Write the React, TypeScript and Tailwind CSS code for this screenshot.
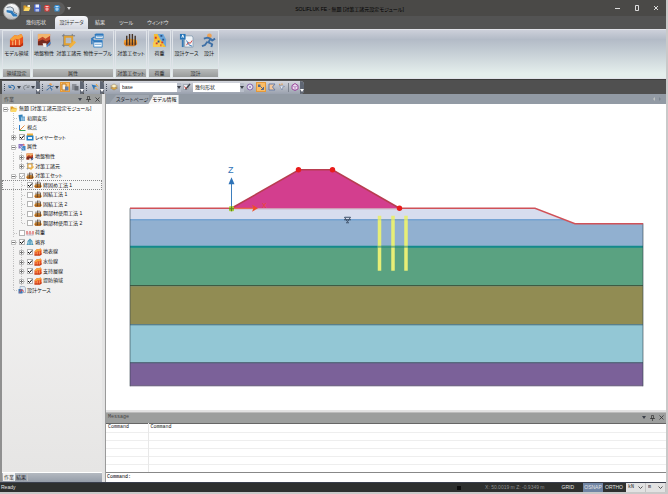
import type { ReactNode } from "react";

const UI = "font-['Liberation_Sans','Noto_Sans_CJK_JP',sans-serif]";
const MONO = "font-['Liberation_Mono','Noto_Sans_CJK_JP',monospace]";

/* ---------- icons ---------- */

type IconProps = { className?: string };

function Svg({ className = "size-4", box = "0 0 16 16", children }: IconProps & { box?: string; children: ReactNode }) {
  return (
    <svg viewBox={box} className={`shrink-0 ${className}`} fill="none" aria-hidden="true">
      {children}
    </svg>
  );
}

const ModelIcon = ({ className }: IconProps) => (
  <Svg className={className}>
    <path d="M1 7l5-5 3 1 4-2 2 3v9l-3 2H1z" fill="#e8501c" />
    <path d="M1 7l5-5 3 1 4-2 2 3-5 3-3-1-3 3z" fill="#f7a23b" />
    <path d="M4 9v6M7 7v8M11 7v8" stroke="#fbc58a" />
    <path d="M1 13h11l3-3v3l-3 2H1z" fill="#b92f12" />
  </Svg>
);
const GroundIcon = ({ className }: IconProps) => (
  <Svg className={className}>
    <path d="M1 1h13v12H1z" fill="#c4492a" />
    <path d="M1 1h13v2L9 6 6 4 1 7z" fill="#f2b46c" />
    <path d="M1 9l5-2 4 2 4-2v6H1z" fill="#74291f" />
    <path d="M9 14l5-5 1 2-4 4z" fill="#4b84c4" />
    <path d="M6 11h4v4H7z" fill="#f2ece6" />
  </Svg>
);
const SpecIcon = ({ className }: IconProps) => (
  <Svg className={className}>
    <path d="M1 3h14M1 13h10M3 1v14M12 1v9" stroke="#6d7480" strokeWidth="1" />
    <path d="M4 4h8v8H4z" stroke="#dfa032" strokeWidth="2" />
    <path d="M8 14l6-6 2 2-6 6z" fill="#f3b23c" />
  </Svg>
);
const TableIcon = ({ className }: IconProps) => (
  <Svg className={className}>
    <path d="M6 1h8v5H6zM4 8h9v7H4z" fill="#f7fbff" stroke="#3d86c6" />
    <path d="M5 2h9M4 9h9" stroke="#2f78bd" strokeWidth="2" />
    <path d="M7 4h6M5 12h7" stroke="#6a9fce" />
    <path d="M5 4L2 6l3 3M2 6v6" stroke="#2f78bd" strokeWidth="1.500" />
  </Svg>
);
const PileIcon = ({ className }: IconProps) => (
  <Svg className={className}>
    <path d="M1 8q7-4 14 0v4H1z" fill="#f7a030" />
    <path d="M1 10h14v2l-3 2H3l-2-2z" fill="#d8812a" />
    <path d="M4 3v10M7 1v12M10 1v12M13 3v10" stroke="#463326" strokeWidth="1.500" />
  </Svg>
);
const LoadIcon = ({ className }: IconProps) => (
  <Svg className={className}>
    <path d="M2 1h4l9 14H2z" fill="#f4bd35" />
    <path d="M6 1h6l3 6v8L9 7z" fill="#6aa5d9" />
    <path d="M1 10l6-3 5 8H1z" fill="#f7cb50" />
    <path d="M4 4v2M10 10h2M4 11h2M9 13h1" stroke="#d2382c" strokeWidth="2" />
    <path d="M9 3h2M12 6v2M7 8v2" stroke="#274f86" strokeWidth="2" />
  </Svg>
);
const CaseIcon = ({ className }: IconProps) => (
  <Svg className={className}>
    <path d="M6 3h8l1 2v10H6z" fill="#f0f4f8" stroke="#8ea2b5" />
    <path d="M1 1h6v6H1z" fill="#2474b8" />
    <path d="M3 5l1-3 1 3" stroke="#fff" />
    <path d="M4 7v8" stroke="#3679b4" strokeWidth="2" />
    <path d="M8 13l2-3 2 1 2-3" stroke="#d33d38" />
    <path d="M8 8l3 5 3 1" stroke="#3679b4" />
  </Svg>
);
const RunIcon = ({ className }: IconProps) => (
  <Svg className={className}>
    <circle cx="9" cy="3" r="2.500" fill="#eda254" />
    <path d="M3 6l4-1 3 1-2 4 4 2-1 3M7 9l-3 4-3 1M10 6l2 2 3-2" stroke="#3f70a6" strokeWidth="2" strokeLinejoin="round" />
  </Svg>
);
const FolderIcon = ({ className }: IconProps) => (
  <Svg className={className}>
    <path d="M1 3h5l1 2h6v3H4l-3 6z" fill="#d99a24" />
    <path d="M4 7h11l-3 7H1z" fill="#fbd766" />
    <path d="M9 2h5v4H9z" fill="#f4f1da" />
  </Svg>
);
const SaveIcon = ({ className }: IconProps) => (
  <Svg className={className}>
    <path d="M2 1h11l2 2v12H2z" fill="#4b66c8" />
    <path d="M5 1h7v6H5z" fill="#edf2fb" />
    <path d="M5 10h7v5H5z" fill="#b4c3ea" />
  </Svg>
);
const HouseIcon = ({ className, color }: IconProps & { color: string }) => (
  <Svg className={className}>
    <path d="M1 7l3-5h8l3 5-2 1v7H3V8z" fill={color} />
    <path d="M5 5h6M8 7v7" stroke="#fff" strokeWidth="1.500" />
    <path d="M5 9h2v2H5zM9 9h2v2H9z" fill="#fff" />
  </Svg>
);
const LayersIcon = ({ className }: IconProps) => (
  <Svg className={className}>
    <path d="M1 10l7-4 7 4-7 4z" fill="#e5ad45" stroke="#8d7448" />
    <path d="M1 6l7-4 7 4-7 4z" fill="#fbf0c5" stroke="#917b50" />
  </Svg>
);
const LayerSetIcon = ({ className }: IconProps) => (
  <Svg className={className}>
    <path d="M2 1h12v5H2z" fill="#f2b13c" />
    <path d="M1 5h14v10H1z" fill="#1f7fc5" />
    <path d="M4 8h8v4H4z" fill="#e9f4fb" />
  </Svg>
);
const InitialIcon = ({ className }: IconProps) => (
  <Svg className={className}>
    <path d="M1 2l8-1 1 12-7 2z" fill="#2f7fb9" />
    <path d="M5 5h9v9H6z" fill="#5f9fcb" />
    <path d="M7 7v6M10 7v6M12 7v6" stroke="#dceef8" />
  </Svg>
);
const ViewIcon = ({ className }: IconProps) => (
  <Svg className={className}>
    <path d="M3 2v11" stroke="#2b7cc9" strokeWidth="2" />
    <path d="M3 13h12" stroke="#35a853" strokeWidth="2" />
    <path d="M3 13L13 3" stroke="#e58a3c" strokeWidth="2" />
  </Svg>
);
const AttributeIcon = ({ className }: IconProps) => (
  <Svg className={className}>
    <path d="M1 2h9v9H1z" fill="#8a73c2" />
    <path d="M7 6h8v9H7z" fill="#3f86c4" />
    <path d="M2 14L13 2M3 5l9 8" stroke="#fff" strokeWidth="1" />
    <path d="M10 1l4 3-3 2z" fill="#d4473c" />
  </Svg>
);
const LoadSetIcon = ({ className }: IconProps) => (
  <Svg className={className}>
    <path d="M2 4v7M8 4v7M14 4v7" stroke="#d43a3a" strokeWidth="2" />
    <path d="M1 12h14" stroke="#8b86a6" />
    <path d="M5 7v3M11 7v3" stroke="#d48e9c" />
  </Svg>
);
const BoundaryIcon = ({ className }: IconProps) => (
  <Svg className={className}>
    <path d="M8 1l5 5v4l2 4H1l2-4V6z" fill="#4896b8" />
    <path d="M5 7v6M8 5v8M11 7v6" stroke="#e4f3f8" />
  </Svg>
);
const CaseSetIcon = ({ className }: IconProps) => (
  <Svg className={className}>
    <path d="M4 1h9l2 3v9H4z" fill="#dfe8f2" stroke="#7289a6" />
    <path d="M1 6h8v9H1z" fill="#3f77b4" />
    <path d="M3 13l4-6 5 4" stroke="#e4504b" strokeWidth="2" />
  </Svg>
);

function Caret({ className = "text-[#3c414a]" }: IconProps) {
  return (
    <Svg box="0 0 4 3" className={`h-[3px] w-1 ${className}`}>
      <path d="M0 0h4L2 3z" fill="currentColor" />
    </Svg>
  );
}

/* ---------- title bar and menu ---------- */

function TitleBar() {
  return (
    <header className="flex h-4 items-center bg-[#4a4947] pl-[21px]">
      <div className="flex h-[13px] items-center gap-[2px] rounded-r-full bg-[#5d5c5b] pr-1 pl-[2px]">
        <button aria-label="開く"><FolderIcon className="size-2" /></button>
        <button aria-label="保存"><SaveIcon className="size-2" /></button>
        <button aria-label="赤"><HouseIcon className="size-2" color="#d4403c" /></button>
        <button aria-label="青"><HouseIcon className="size-2" color="#3b8fd0" /></button>
      </div>
      <button aria-label="カスタマイズ" className="ml-[2px]"><Caret className="text-[#d0d0d0]" /></button>
      <h1 className="flex-1 pt-[2px] pl-[13px] text-center text-black">SOLIFLUK FE - 無題 [対策工諸元設定モジュール]</h1>
      <div className="mr-[7px] flex w-[44px] justify-between text-[#dcdcdc]">
        <button aria-label="最小化"><Svg className="size-[6px]" box="0 0 6 6"><path d="M0 3.500h5" stroke="currentColor" /></Svg></button>
        <button aria-label="最大化"><Svg className="size-[6px]" box="0 0 6 6"><path d="M1.500.5h3v5h-3z" stroke="currentColor" /></Svg></button>
        <button aria-label="閉じる"><Svg className="size-[6px]" box="0 0 6 6"><path d="M1 1l4 4M5 1L1 5" stroke="currentColor" /></Svg></button>
      </div>
    </header>
  );
}

function MenuTabs() {
  const tab = "px-[7px] text-[#e6e6e6]";
  return (
    <nav className="flex h-[13px] items-center bg-[#535353] pl-[19px]">
      <button className={tab}>幾何形状</button>
      <button className="ml-[2px] h-full w-[33px] rounded-t-sm bg-linear-to-b from-[#f6f7fa] to-[#d4d7e0] text-[#2b2b2b]">設計データ</button>
      <button className={tab}>結果</button>
      <button className={tab}>ツール</button>
      <button className={tab}>ウィンドウ</button>
    </nav>
  );
}

/* ---------- ribbon ---------- */

function RibbonGroup({ label, className, children }: { label: string; className: string; children: ReactNode }) {
  return (
    <section className={`flex flex-col border border-[#dfe3e8] ${className}`}>
      <div className="flex flex-1 justify-around">{children}</div>
      <h2 className="h-[8px] bg-linear-to-b from-[#b9bbbb] to-[#989b9b] text-center leading-[8px] text-[#2c2c2c]">{label}</h2>
    </section>
  );
}

function RibbonButton({ label, children }: { label: string; children: ReactNode }) {
  return (
    <button className="flex flex-col items-center gap-[2px] pt-[2px] whitespace-nowrap text-[#111]">
      {children}
      <span>{label}</span>
    </button>
  );
}

function Ribbon() {
  const icon = "size-[15px]";
  return (
    <div className="flex h-[50px] gap-[1px] border-y border-[#e0e2e8] bg-linear-to-b from-[#cdd0da] from-0% via-[#b3bbc7] via-20% to-[#e4eeec] to-90% pl-[2px]">
      <RibbonGroup label="領域設定" className="w-[29px]">
        <RibbonButton label="モデル領域"><ModelIcon className={icon} /></RibbonButton>
      </RibbonGroup>
      <RibbonGroup label="属性" className="w-[82px]">
        <RibbonButton label="地盤物性"><GroundIcon className={icon} /></RibbonButton>
        <RibbonButton label="対策工諸元"><SpecIcon className={icon} /></RibbonButton>
        <RibbonButton label="物性テーブル"><TableIcon className={icon} /></RibbonButton>
      </RibbonGroup>
      <RibbonGroup label="対策工セット" className="w-[32px]">
        <RibbonButton label="対策工セット"><PileIcon className={icon} /></RibbonButton>
      </RibbonGroup>
      <RibbonGroup label="荷重" className="w-[23px]">
        <RibbonButton label="荷重"><LoadIcon className={icon} /></RibbonButton>
      </RibbonGroup>
      <RibbonGroup label="設計" className="w-[47px]">
        <RibbonButton label="設計ケース"><CaseIcon className={icon} /></RibbonButton>
        <RibbonButton label="設計"><RunIcon className={icon} /></RibbonButton>
      </RibbonGroup>
    </div>
  );
}

/* ---------- toolbar ---------- */

function ToolGroup({ className, children }: { className: string; children: ReactNode }) {
  return (
    <div className={`flex h-[13px] items-center rounded-r-sm bg-linear-to-b from-[#d3d6dd] to-[#9aa1ae] ${className}`}>
      <span className="mx-[2px] h-[7px] w-px border-l border-dotted border-[#4a5260]" />
      <div className="flex flex-1 items-center justify-around">{children}</div>
      <button aria-label="その他" className="flex h-full w-1 items-end rounded-r-sm bg-[#5f6673] pb-[2px]">
        <Caret className="text-white" />
      </button>
    </div>
  );
}

function ToolButton({ label, on, children }: { label: string; on?: boolean; children: ReactNode }) {
  return (
    <button aria-label={label} aria-pressed={on} className={on ? "border border-[#e39a3c] bg-[#fbbd66]" : ""}>
      {children}
    </button>
  );
}

function Combo({ label, value, className }: { label: string; value: string; className: string }) {
  return (
    <div className={`relative h-[9px] bg-white ${className}`}>
      <select aria-label={label} className="block size-full appearance-none pl-[2px] leading-[9px] text-[#222]">
        <option>{value}</option>
      </select>
      <span className="pointer-events-none absolute inset-y-0 right-0 flex w-1 items-center bg-[#b9bfca]"><Caret /></span>
    </div>
  );
}

function Toolbar() {
  const i = "size-2";
  return (
    <div className="flex h-[15px] items-center border-t border-[#3c3c3c] bg-[#505050] pl-[2px]">
      <ToolGroup className="w-[38px]">
        <ToolButton label="元に戻す"><Svg className={i}><path d="M2 4v5h5M3 8q4-6 9-2 3 4-2 8" stroke="#2c6ca8" strokeWidth="2" /></Svg></ToolButton>
        <Caret />
        <ToolButton label="やり直し"><Svg className={i}><path d="M14 4v5H9M13 8Q9 2 4 6q-3 4 2 8" stroke="#84898f" strokeWidth="2" /></Svg></ToolButton>
        <Caret />
      </ToolGroup>
      <ToolGroup className="w-[44px]">
        <ToolButton label="実行"><RunIcon className={i} /></ToolButton>
        <Caret />
        <ToolButton label="選択" on><Svg className={i}><path d="M2 2h8v12H2z" fill="#f6f0e4" stroke="#c07820" strokeWidth="2" /><path d="M8 7h7v8H8z" fill="#607ca8" /></Svg></ToolButton>
        <ToolButton label="貼り付け"><Svg className={i}><path d="M2 2h9v12H2z" fill="#8d9199" /><path d="M7 6h8v9H7z" fill="#676b73" /></Svg></ToolButton>
      </ToolGroup>
      <ToolGroup className="w-[20px]">
        <ToolButton label="ピック"><Svg className={i}><path d="M1 3l12 3-5 2-2 6z" fill="#2e77b8" /><path d="M10 2l4 5M8 9l5 5" stroke="#f1a331" strokeWidth="2" /></Svg></ToolButton>
      </ToolGroup>
      <ToolGroup className="w-[200px]">
        <LayersIcon className={i} />
        <Combo label="レイヤー" value="base" className="w-[61px]" />
        <ToolButton label="編集"><Svg className={i}><path d="M1 3h9v10H1z" fill="#e9edf2" stroke="#7b8490" /><path d="M5 13L14 2" stroke="#41464e" strokeWidth="3" /><path d="M3 7l4 5" stroke="#d84034" strokeWidth="2" /></Svg></ToolButton>
        <Combo label="表示" value="幾何形状" className="w-[51px]" />
        <ToolButton label="点"><Svg className={i}><circle cx="8" cy="8" r="6" fill="#ece4f4" stroke="#8c6fb0" strokeWidth="2" /><path d="M5 5l6 6M11 5l-6 6" stroke="#5c5f97" /></Svg></ToolButton>
        <ToolButton label="線" on><Svg className={i}><path d="M2 3h5v5H2z" fill="#54698a" /><path d="M7 7l6 6M13 8v5H8" stroke="#54698a" strokeWidth="2" /></Svg></ToolButton>
        <ToolButton label="面"><Svg className={i}><path d="M2 2h12L9 8l5 6H2z" fill="#f2c79c" stroke="#6a7fa6" strokeWidth="2" /></Svg></ToolButton>
        <ToolButton label="矢印"><Svg className={i}><path d="M3 5l10 2-4 2-1 5z" fill="#eef1f6" stroke="#5e7397" /><path d="M2 2l3 2M8 1v3" stroke="#e2913b" strokeWidth="2" /></Svg></ToolButton>
        <span className="h-[9px] w-px bg-[#7d8490]" />
        <ToolButton label="立体"><Svg className={i}><path d="M8 1l6 4v7l-6 3-6-3V5z" fill="#f0d9ee" stroke="#9c4c9c" strokeWidth="2" /><path d="M2 5l6 3 6-3M8 8v7" stroke="#7a4f9e" /></Svg></ToolButton>
      </ToolGroup>
    </div>
  );
}

/* ---------- project tree ---------- */

type Node = { guides: string; text: string; icon: (p: IconProps) => ReactNode; check?: "on" | "off" | "mixed"; selected?: boolean };

const NODES: Node[] = [
  { guides: "-", text: "無題 [対策工諸元設定モジュール]", icon: FolderIcon },
  { guides: " t", text: "初期変形", icon: InitialIcon },
  { guides: " t", text: "視点", icon: ViewIcon },
  { guides: " +", text: "レイヤーセット", icon: LayerSetIcon, check: "on" },
  { guides: " -", text: "属性", icon: AttributeIcon },
  { guides: " |+", text: "地盤物性", icon: GroundIcon },
  { guides: " |+", text: "対策工諸元", icon: SpecIcon },
  { guides: " -", text: "対策工セット", icon: PileIcon, check: "mixed" },
  { guides: " |t", text: "締固め工法 1", icon: PileIcon, check: "on", selected: true },
  { guides: " |t", text: "固結工法 1", icon: PileIcon, check: "off" },
  { guides: " |t", text: "固結工法 2", icon: PileIcon, check: "off" },
  { guides: " |t", text: "鋼部材使用工法 1", icon: PileIcon, check: "off" },
  { guides: " |l", text: "鋼部材使用工法 2", icon: PileIcon, check: "off" },
  { guides: " t", text: "荷重", icon: LoadSetIcon, check: "off" },
  { guides: " -", text: "境界", icon: BoundaryIcon, check: "on" },
  { guides: " |+", text: "地表線", icon: ModelIcon, check: "on" },
  { guides: " |+", text: "水位線", icon: ModelIcon, check: "on" },
  { guides: " |+", text: "支持層線", icon: ModelIcon, check: "on" },
  { guides: " |+", text: "堤防領域", icon: ModelIcon, check: "on" },
  { guides: " l", text: "設計ケース", icon: CaseSetIcon },
];

const GUIDE_PATHS: Record<string, string> = {
  " ": "",
  "|": "M3.5 0v10",
  t: "M3.5 0v10M4 5.5h4",
  l: "M3.5 0v5M4 5.5h4",
  "+": "M3.5 0v10M4 5.5h4",
  "-": "M4 5.5h4",
};

function Guide({ kind }: { kind: string }) {
  return (
    <Svg box="0 0 8 10" className="h-[10px] w-2">
      <path d={GUIDE_PATHS[kind]} stroke="#c2c2c2" strokeDasharray="1 1" />
      {(kind === "+" || kind === "-") && (
        <>
          <path d="M1.5 3.5h4v4h-4z" fill="#fff" stroke="#bdbdbd" />
          <path d={kind === "+" ? "M2 5.5h3M3.5 4v3" : "M2 5.5h3"} stroke="#777" />
        </>
      )}
    </Svg>
  );
}

function Check({ state, label }: { state: "on" | "off" | "mixed"; label: string }) {
  return (
    <span className="relative flex w-2 shrink-0 items-center pl-[1px]">
      <input
        type="checkbox"
        aria-label={label}
        defaultChecked={state !== "off"}
        className="size-[6px] appearance-none border border-[#b4b4b4] bg-white"
      />
      {state !== "off" && (
        <Svg box="0 0 6 6" className={`pointer-events-none absolute left-[1px] size-[6px] ${state === "on" ? "text-black" : "text-[#aaa]"}`}>
          <path d="M1 3l1.500 1.500L5 1.500" stroke="currentColor" />
        </Svg>
      )}
    </span>
  );
}

function PanelButtons() {
  return (
    <div className="flex w-[22px] items-center justify-between text-[#333]">
      <button aria-label="メニュー"><Caret /></button>
      <button aria-label="固定"><Svg box="0 0 5 6" className="h-[6px] w-[5px]"><path d="M1.500.5h2v3h-2zM0 3.500h5M2.500 4v2" stroke="currentColor" strokeWidth=".7" /></Svg></button>
      <button aria-label="閉じる"><Svg box="0 0 5 5" className="size-[5px]"><path d="M.5.5l4 4M4.500.5l-4 4" stroke="currentColor" strokeWidth=".8" /></Svg></button>
    </div>
  );
}

function ProjectPanel() {
  return (
    <aside className="flex w-[104px] shrink-0 flex-col border-x-2 border-l-[#909090] border-r-[#e4e4e4]">
      <div className="flex h-[10px] items-center justify-between bg-[#9c9e9d] pr-[2px] pl-[2px] text-[#444]">
        <h2>作業</h2>
        <PanelButtons />
      </div>
      <div className="min-h-0 flex-1 bg-linear-to-b from-[#fcfcfc] to-[#e6e5e4]">
        <ul className="flex h-[191px] flex-col">
          {NODES.map(({ guides, text, icon: Icon, check, selected }) => (
            <li
              key={text}
              className={`flex min-h-0 flex-1 items-center whitespace-nowrap text-[#111] ${selected ? "outline-1 -outline-offset-1 outline-[#8a8a8a] outline-dotted" : ""}`}
            >
              {guides.split("").map((kind, n) => <Guide key={n} kind={kind} />)}
              {check && <Check state={check} label={text} />}
              <Icon className="size-2" />
              <span className="ml-px">{text}</span>
            </li>
          ))}
        </ul>
      </div>
      <div className="flex h-[10px] items-start border-t border-white bg-linear-to-b from-[#b4b9c0] to-[#959da9] pl-[1px] leading-[8px]">
        <button className="bg-[#f2f2f2] px-px text-[#333]">作業</button>
        <button className="border-r border-[#bbb] px-px text-[#222]">結果</button>
      </div>
    </aside>
  );
}

/* ---------- model view ---------- */

const LAYERS = [
  { y: 246, h: 40, fill: "#5aa281" },
  { y: 286, h: 38, fill: "#918c53" },
  { y: 324, h: 38, fill: "#93c7d5" },
  { y: 362, h: 23, fill: "#7b6199" },
];

function ModelView() {
  return (
    <svg viewBox="106 104 560 305" className="block min-h-0 w-full flex-1 bg-white" role="img" aria-label="モデル">
      <path d="M130 208.500h405l28 11H130z" fill="#d7ddee" />
      <path d="M130 219.500h434l11 4h68v22.500H130z" fill="#91b0d0" />
      {LAYERS.map(({ y, h, fill }) => <rect key={y} x="130" y={y} width="513" height={h} fill={fill} />)}
      <path d="M130 285.500h513" stroke="#34442f" />
      <path d="M130 324.500h513M130 362.500h513" stroke="#41656f" />
      <path d="M130 385.500h513" stroke="#4f4268" />
      <path d="M130 219.500h434" stroke="#5a93cc" />
      <path d="M130 246.500h513" stroke="#158a8b" strokeWidth="2" />
      <path d="M130 208v178M643 223v163" stroke="#30404a" strokeOpacity=".6" />
      <path d="M231.500 208L299 169.500h33.500L399.500 208z" fill="#d33e8e" />
      <path d="M231.500 208.500h168" stroke="#c78ea8" />
      <path d="M231.500 208L299 169.500h33.500L399.500 208" stroke="#b83d50" strokeWidth="1.500" fill="none" />
      <path d="M130 208h101.500M399.500 208H535l40 15.500h68" stroke="#cf5158" strokeWidth="1.500" fill="none" />
      <g fill="#e81c1c">
        <circle cx="298.500" cy="169.500" r="2.700" />
        <circle cx="332.500" cy="169.500" r="2.700" />
        <circle cx="399.500" cy="208" r="2.700" />
      </g>
      <path d="M379.500 215.500v55M393 215.500v55M406 215.500v55" stroke="#e7ee76" strokeWidth="3.500" />
      <path d="M378 219.500h30" stroke="#8fa99c" strokeOpacity=".35" />
      <path d="M378 246.500h30" stroke="#4f9a7d" strokeOpacity=".7" strokeWidth="2" />
      <path d="M344.500 217h6l-3 4.500zM344 219.500h7M346 222.500h3" stroke="#3f5068" fill="none" />
      <path d="M231.500 208v-25" stroke="#3d7ebd" />
      <path d="M231.500 177l3 7h-6z" fill="#2f73b8" />
      <path d="M234 208h20" stroke="#ef5b32" />
      <path d="M258 208l-6-3.500 1.500 3.500-1.500 3.500z" fill="#ef4f25" />
      <rect x="229" y="206" width="5" height="5" rx="1" fill="#a6cf35" />
      <path d="M231.500 206v5M229 208.500h5" stroke="#5f7d22" />
      <text x="228" y="173" fontSize="9" fill="#2f73b8">Z</text>
      <text x="262" y="208" fontSize="7" fill="#f04a2a">X</text>
    </svg>
  );
}

function DocumentTabs() {
  return (
    <div className="flex h-[10px] items-end bg-[#929aa4] pl-[3px]">
      <button className="h-[9px] bg-[#a0a7b1] pr-px pl-[7px] text-[#1e2329] [clip-path:polygon(7px_0,100%_0,100%_100%,0_100%)]">スタートページ</button>
      <button className="-ml-px h-[9px] bg-[#f6f6f6] pr-[2px] pl-1 text-black [clip-path:polygon(5px_0,100%_0,100%_100%,0_100%)]">モデル情報</button>
      <div className="mr-1 ml-auto flex gap-1 self-center text-[#bfc2c0]">
        <button aria-label="前へ"><Svg box="0 0 3 4" className="h-1 w-[3px]"><path d="M3 0v4L1 2z" fill="currentColor" /></Svg></button>
        <button aria-label="次へ"><Svg box="0 0 3 4" className="h-1 w-[3px]"><path d="M0 0v4l2-2z" fill="#7c858f" /></Svg></button>
      </div>
    </div>
  );
}

function MessagePanel() {
  return (
    <section className="mt-[2px] border-t border-[#bbb]">
      <div className="flex h-[10px] items-center justify-between bg-[#9c9e9d] pr-[2px] pl-[2px] text-[#444]">
        <h2 className={MONO}>Message</h2>
        <PanelButtons />
      </div>
      <table className={`w-full table-fixed border-t border-[#666] bg-white text-left text-[#222] ${MONO}`}>
        <thead>
          <tr className="h-[9px]">
            <th className="w-[42px] border-r border-[#e8e8e8] pl-[2px] font-normal">Command</th>
            <th className="pl-[2px] font-normal">Command</th>
          </tr>
        </thead>
        <tbody>
          {[1, 2, 3, 4, 5].map((row) => (
            <tr key={row} className="h-2 border-t border-[#eeeeee]">
              <td className="border-r border-[#e8e8e8]" />
              <td />
            </tr>
          ))}
        </tbody>
      </table>
      <div className={`flex h-[10px] items-center border-t border-[#888] bg-white pl-px ${MONO}`}>
        <label htmlFor="command">Command:</label>
        <input id="command" className="h-2 min-w-0 flex-1 outline-none" />
      </div>
    </section>
  );
}

/* ---------- status bar ---------- */

function UnitSelect({ label, value }: { label: string; value: string }) {
  return (
    <div className="relative h-[9px] w-[20px] border-r border-[#c4c4c4] bg-[#e2e2e2]">
      <select aria-label={label} className={`block size-full appearance-none pl-[2px] leading-[9px] text-[#222] ${MONO}`}>
        <option>{value}</option>
      </select>
      <Svg box="0 0 5 3" className="pointer-events-none absolute top-[3px] right-[2px] h-[3px] w-[5px]">
        <path d="M.5.5l2 2 2-2" stroke="#555" />
      </Svg>
    </div>
  );
}

function StatusBar() {
  return (
    <footer className="flex h-[10px] items-center border-t border-[#3a3f4d] bg-[#2e302f] pl-px text-[#e4e4e4]">
      <span>Ready</span>
      <span className="ml-auto size-1 bg-[#0c0c0c]" />
      <span className="ml-[24px] text-[#8f8f8f]">X: 50.0019 m Z: -0.9349 m</span>
      <button className="ml-[16px] px-[1px]">GRID</button>
      <button aria-pressed="true" className="ml-[8px] h-[9px] w-[20px] bg-[#7085a4]">OSNAP</button>
      <button className="mr-[3px] ml-[2px]">ORTHO</button>
      <UnitSelect label="力の単位" value="kN" />
      <UnitSelect label="長さの単位" value="m" />
    </footer>
  );
}

export default function App() {
  return (
    <div className={`relative flex h-screen flex-col border-r-2 border-b-2 border-[#c9c9c9] bg-[#e2e2e2] text-[5px] leading-[7px] [font-feature-settings:'palt'] ${UI}`}>
      <TitleBar />
      <MenuTabs />
      <button
        aria-label="アプリケーションメニュー"
        className="absolute top-[3px] left-[3px] flex size-[17px] items-center justify-center rounded-full border border-[#999] bg-linear-to-b from-white to-[#bcbec2]"
      >
        <Svg className="size-[13px]">
          <path d="M2 3q5-2 8 1l1 5 4 2v4h-5l-3-4-5-1z" fill="#d9e6f0" />
          <path d="M2 3q5-2 8 1l1 5 4 2" stroke="#5b6470" />
          <path d="M2 9l5 1 3 4h5v-2l-4-2-2-3-7-1z" fill="#2d78b9" />
        </Svg>
      </button>
      <Ribbon />
      <Toolbar />
      <div className="flex min-h-0 flex-1">
        <ProjectPanel />
        <main className="ml-[1px] flex min-w-0 flex-1 flex-col border-l border-[#9a9a9a]">
          <DocumentTabs />
          <ModelView />
          <MessagePanel />
        </main>
      </div>
      <StatusBar />
    </div>
  );
}
